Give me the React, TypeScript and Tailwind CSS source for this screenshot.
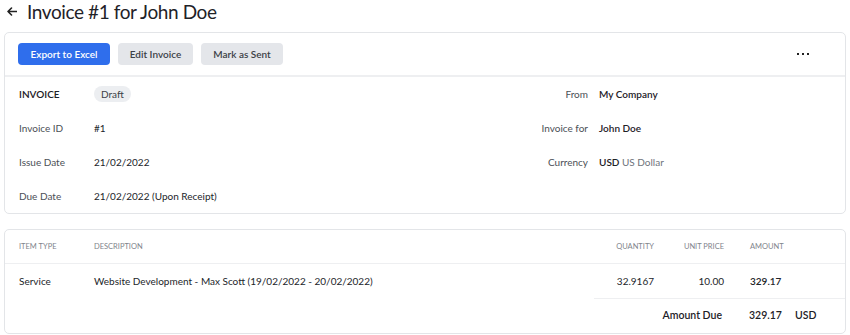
import React from "react";

const FONT = "font-['Lato','Liberation_Sans',sans-serif]";

function InfoRow({
  label,
  value,
  rightLabel,
  rightValue,
}: {
  label: React.ReactNode;
  value: React.ReactNode;
  rightLabel?: string;
  rightValue?: React.ReactNode;
}) {
  return (
    <div className="flex h-[34px] items-center text-[10px]">
      <div className="flex w-[406px] items-center">
        <div className="w-[75px] text-[#4b4f56]">{label}</div>
        <div className="text-[#22252a]">{value}</div>
      </div>
      {rightLabel && (
        <div className="flex items-center">
          <div className="w-[163px] text-right text-[#4b4f56]">{rightLabel}</div>
          <div className="ml-[11px] font-semibold text-[#1d2026]">{rightValue}</div>
        </div>
      )}
    </div>
  );
}

export default function App() {
  return (
    <div className={`${FONT} h-[335px] w-[850px] overflow-hidden bg-white`}>
      {/* Page title */}
      <div className="flex h-[22px] items-center pl-[7px]">
        <svg width="10" height="9" viewBox="0 0 10 9" fill="none" className="mr-[10px]">
          <path d="M9.5 4.5H1M4.5 1L1 4.5L4.5 8" stroke="#222" strokeWidth="1.6" strokeLinecap="round" strokeLinejoin="round" />
        </svg>
        <h1 className="text-[19px] leading-none tracking-[-0.4px] text-[#1f2228]">Invoice #1 for John Doe</h1>
      </div>

      {/* Invoice card */}
      <div className="mx-[4px] mt-[10px] rounded-[5px] border border-[#e3e5e8]">
        <div className="flex h-[44px] items-center justify-between border-b-2 border-[#eeeff1] pl-[13px] pr-[36px]">
          <div className="flex gap-[8px] text-[10px] font-semibold">
            <button className="h-[22px] w-[92px] rounded-[4px] bg-[#2f6eec] text-white">Export to Excel</button>
            <button className="h-[22px] w-[75px] rounded-[4px] bg-[#e4e6ea] text-[#3b3f46]">Edit Invoice</button>
            <button className="h-[22px] w-[82px] rounded-[4px] bg-[#e4e6ea] text-[#3b3f46]">Mark as Sent</button>
          </div>
          <div className="flex gap-[3px]">
            <span className="h-[2px] w-[2px] bg-[#222]" />
            <span className="h-[2px] w-[2px] bg-[#222]" />
            <span className="h-[2px] w-[2px] bg-[#222]" />
          </div>
        </div>

        <div className="pl-[14px]">
          <InfoRow
            label={<span className="font-semibold text-[#1d2026]">INVOICE</span>}
            value={
              <span className="rounded-full bg-[#eceef1] px-[7px] py-[2px] text-[#3b3f46]">Draft</span>
            }
            rightLabel="From"
            rightValue="My Company"
          />
          <InfoRow label="Invoice ID" value="#1" rightLabel="Invoice for" rightValue="John Doe" />
          <InfoRow
            label="Issue Date"
            value="21/02/2022"
            rightLabel="Currency"
            rightValue={
              <>
                USD <span className="font-normal text-[#6e737b]">US Dollar</span>
              </>
            }
          />
          <InfoRow label="Due Date" value="21/02/2022 (Upon Receipt)" />
        </div>
      </div>

      {/* Items card */}
      <div className="mx-[4px] mt-[15px] rounded-[5px] border border-[#e3e5e8]">
        <div className="flex h-[34px] items-center border-b border-[#eeeff1] pl-[14px] text-[7.5px] uppercase text-[#80848b]">
          <div className="w-[75px]">Item Type</div>
          <div className="w-[490px]">Description</div>
          <div className="w-[70px] text-right">Quantity</div>
          <div className="w-[70px] text-right">Unit Price</div>
          <div className="ml-[26px]">Amount</div>
        </div>
        <div className="flex h-[34px] items-center pl-[14px] text-[10px] text-[#22252a]">
          <div className="w-[75px]">Service</div>
          <div className="w-[490px]">Website Development - Max Scott (19/02/2022 - 20/02/2022)</div>
          <div className="w-[70px] text-right">32.9167</div>
          <div className="w-[70px] text-right">10.00</div>
          <div className="ml-[26px] font-semibold">329.17</div>
        </div>
        <div className="ml-[589px] flex h-[35px] items-center border-t border-[#eeeff1] text-[10.5px] font-semibold text-[#1d2026]">
          <div className="w-[128px] text-right">Amount Due</div>
          <div className="ml-[27px]">329.17</div>
          <div className="ml-[13px]">USD</div>
        </div>
      </div>
    </div>
  );
}
